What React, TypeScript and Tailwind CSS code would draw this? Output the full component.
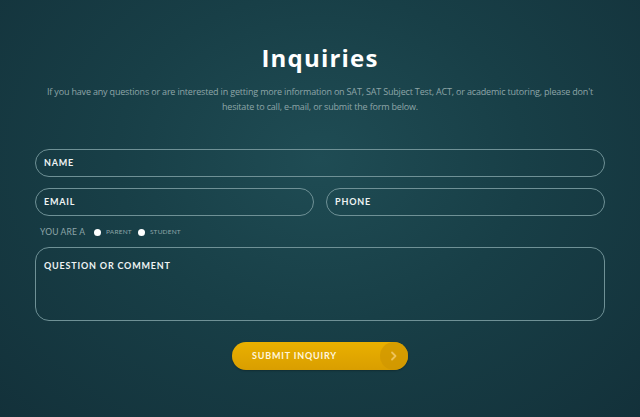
import React from 'react';

const labelCls = "text-[9px] font-bold tracking-[0.09em] text-[#eef3f3] [font-family:Lato,'Liberation_Sans',sans-serif]";

const Field: React.FC<{ label: string; className?: string }> = ({ label, className }) => (
  <div className={`h-[28px] rounded-full border-[1.5px] border-[#6f9196] flex items-center pl-[8px] ${className ?? ''}`}>
    <span className={labelCls}>{label}</span>
  </div>
);

export default function App() {
  return (
    <div className="w-[640px] h-[417px] overflow-hidden bg-[radial-gradient(ellipse_at_50%_38%,#1f4c54_0%,#183f47_45%,#13313a_100%)] flex flex-col items-center">
      <h1 className="mt-[43px] text-[24px] leading-[30px] font-bold tracking-[0.05em] text-white [font-family:'Open_Sans',sans-serif]">
        Inquiries
      </h1>
      <p className="mt-[11px] w-[558px] text-center text-[9px] leading-[15px] tracking-[-0.02em] text-[#8ea5a8] [font-family:'Open_Sans',sans-serif]">
        If you have any questions or are interested in getting more information on SAT, SAT Subject Test, ACT, or academic tutoring, please don't hesitate to call, e-mail, or submit the form below.
      </p>

      <div className="mt-[35px] w-[570px] flex flex-col">
        <Field label="NAME" />
        <div className="mt-[11px] flex gap-[12px]">
          <Field label="EMAIL" className="flex-1" />
          <Field label="PHONE" className="flex-1" />
        </div>
        <div className="mt-[10px] pl-[5px] h-[12px] flex items-center text-[#8ea5a8] [font-family:Lato,'Liberation_Sans',sans-serif]">
          <span className="text-[8.5px] tracking-[0.02em]">YOU ARE A</span>
          <span className="ml-[9px] w-[7px] h-[7px] rounded-full bg-white" />
          <span className="ml-[5px] text-[6.5px] tracking-[0.03em]">PARENT</span>
          <span className="ml-[6px] w-[7px] h-[7px] rounded-full bg-white" />
          <span className="ml-[5px] text-[6.5px] tracking-[0.03em]">STUDENT</span>
        </div>
        <div className="mt-[9px] h-[74px] rounded-[14px] border-[1.5px] border-[#6f9196] pl-[8px] pt-[3px]">
          <span className={labelCls}>QUESTION OR COMMENT</span>
        </div>
      </div>

      <button className="mt-[21px] w-[176px] h-[28px] rounded-full bg-[linear-gradient(180deg,#eab000_0%,#d99e00_100%)] flex items-center relative shadow-[0_1px_2px_rgba(0,0,0,0.25)]">
        <span className="ml-[20px] text-[9px] font-bold tracking-[0.09em] text-[#fff6dd] [font-family:Lato,'Liberation_Sans',sans-serif]">
          SUBMIT INQUIRY
        </span>
        <span className="absolute right-0 top-0 w-[28px] h-[28px] rounded-full bg-[#cf9500]/70 flex items-center justify-center">
          <svg width="8" height="10" viewBox="0 0 8 10" fill="none">
            <path d="M2 1.5 L5.5 5 L2 8.5" stroke="#eec35a" strokeWidth="1.8" strokeLinecap="round" strokeLinejoin="round" />
          </svg>
        </span>
      </button>
    </div>
  );
}
